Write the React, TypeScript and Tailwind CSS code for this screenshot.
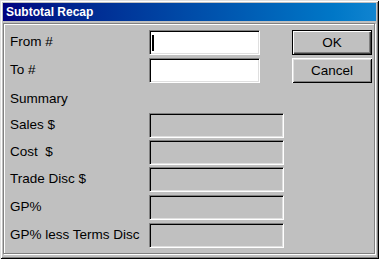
const FONT = "font-['Liberation_Sans',Arial,sans-serif]";

// sunken Win9x edit box
function Field({ width, disabled, caret }: { width: string; disabled?: boolean; caret?: boolean }) {
  return (
    <div
      className={`${width} h-[25px] flex items-center border border-t-[#808080] border-l-[#808080] border-b-white border-r-white shadow-[inset_1px_1px_0_#000,inset_-1px_-1px_0_#dfdfdf] ${disabled ? 'bg-[#c0c0c0]' : 'bg-white'}`}
    >
      {caret && <span className="ml-[2px] w-[2px] h-[16px] bg-black" />}
    </div>
  );
}

function Button({ label, isDefault }: { label: string; isDefault?: boolean }) {
  return (
    <button
      className={`w-[80px] h-[25px] bg-[#c0c0c0] text-black text-[13.5px] leading-none flex items-center justify-center ${
        isDefault
          ? 'border border-black shadow-[inset_1px_1px_0_#fff,inset_-1px_-1px_0_#404040,inset_-2px_-2px_0_#808080]'
          : 'shadow-[inset_1px_1px_0_#fff,inset_-1px_-1px_0_#000,inset_2px_2px_0_#dfdfdf,inset_-2px_-2px_0_#808080]'
      }`}
    >
      {label}
    </button>
  );
}

const SUMMARY_ROWS = [
  { label: 'Sales $', mt: 'mt-0' },
  { label: 'Cost  $', mt: 'mt-[2px]' },
  { label: 'Trade Disc $', mt: 'mt-[2px]' },
  { label: 'GP%', mt: 'mt-[3px]' },
  { label: 'GP% less Terms Disc', mt: 'mt-[3px]' },
];

export default function App() {
  return (
    <div
      className={`${FONT} w-[379px] h-[259px] bg-[#c0c0c0] p-[3px] flex flex-col shadow-[inset_1px_1px_0_#dfdfdf,inset_-1px_-1px_0_#000,inset_2px_2px_0_#fff,inset_-2px_-2px_0_#808080]`}
    >
      {/* Title bar */}
      <div className="h-[18px] flex items-center pl-[3px] bg-gradient-to-r from-[#000080] to-[#1084d0]">
        <span className="text-white text-[12px] font-bold leading-none">Subtotal Recap</span>
      </div>

      {/* Etched frame */}
      <div className="flex-1 mt-[2px] mr-[1px] mb-[2px] border border-[#808080] shadow-[inset_1px_1px_0_#fff,1px_1px_0_#fff] flex text-[13.5px] text-black">
        <div className="w-[287px] pt-[6px] pl-[6px] flex flex-col">
          <div className="flex items-center h-[25px]">
            <span className="w-[139px] whitespace-pre">From #</span>
            <Field width="w-[111px]" caret />
          </div>
          <div className="flex items-center h-[25px] mt-[3px]">
            <span className="w-[139px] whitespace-pre">To #</span>
            <Field width="w-[111px]" />
          </div>
          <div className="h-[30px] flex items-center pt-[2px]">
            <span className="whitespace-pre">Summary</span>
          </div>
          {SUMMARY_ROWS.map(r => (
            <div key={r.label} className={`flex items-center h-[25px] ${r.mt}`}>
              <span className="w-[139px] whitespace-pre">{r.label}</span>
              <Field width="w-[135px]" disabled />
            </div>
          ))}
        </div>

        {/* Buttons */}
        <div className="pt-[6px] pl-[1px] flex flex-col gap-[3px]">
          <Button label="OK" isDefault />
          <Button label="Cancel" />
        </div>
      </div>
    </div>
  );
}
